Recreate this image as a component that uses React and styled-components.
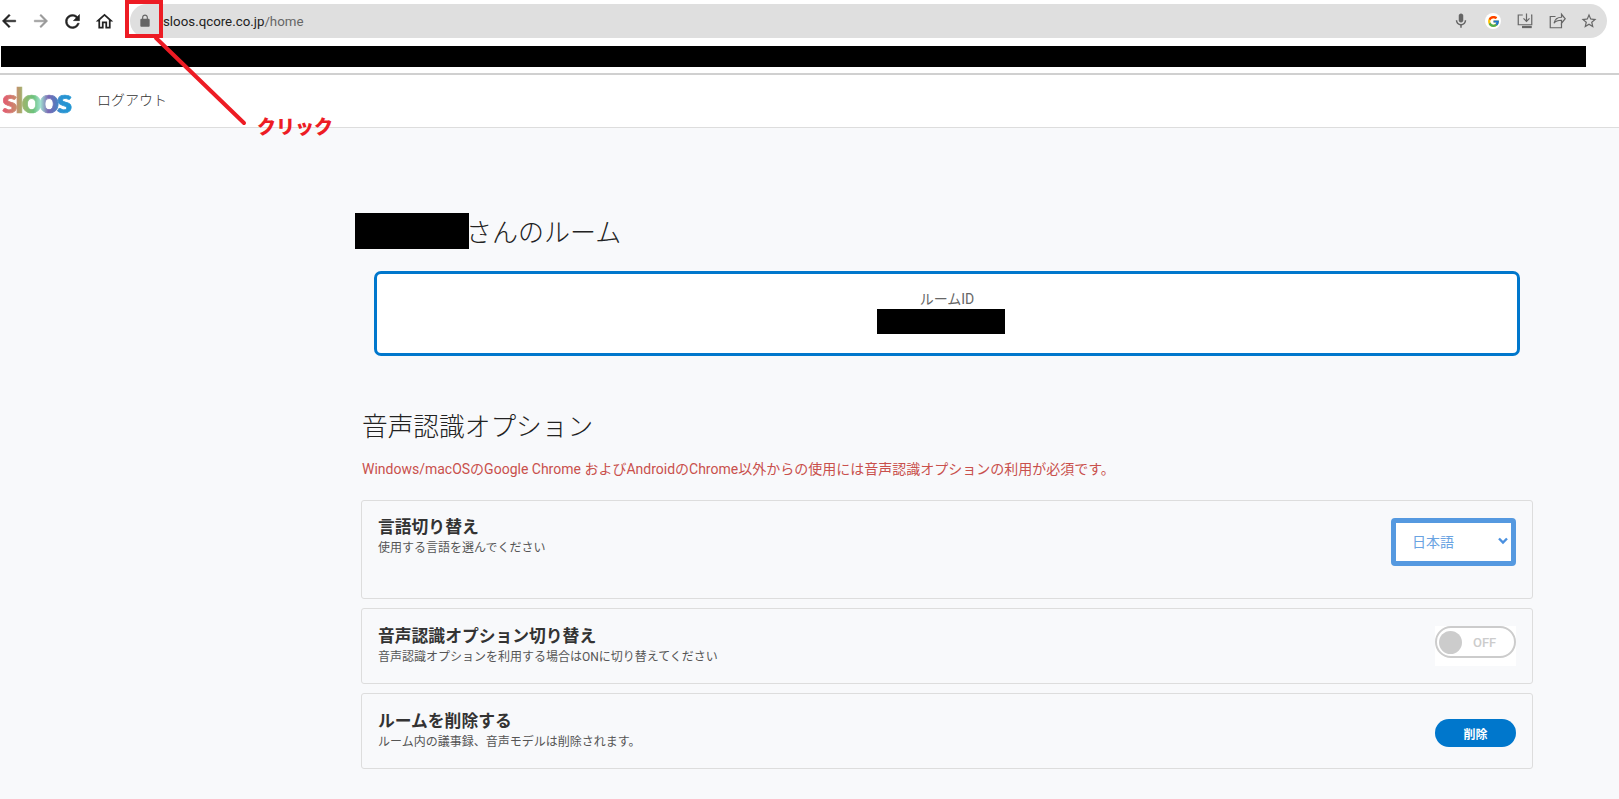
import React from 'react'
import styled, { createGlobalStyle } from 'styled-components'
import { FcGoogle } from 'react-icons/fc'

const GlobalStyle = createGlobalStyle`
  html, body {
    margin: 0;
    background: #f8f9fb;
  }

  body {
    font-family: Roboto, "Noto Sans CJK JP", sans-serif;
    color: #333;
  }
`

const Page = styled.div`
  position: relative;
  min-height: 799px;
  overflow: hidden;
`

const BrowserBar = styled.div`
  display: flex;
  align-items: center;
  height: 46px;
  padding-bottom: 4px;
  box-sizing: border-box;
  background: #fff;
`

const NavIcons = styled.div`
  display: flex;
  align-items: center;
  width: 130px;
  flex-shrink: 0;
`

const NavIcon = styled.svg`
  width: ${props => props.size || 20}px;
  height: ${props => props.size || 20}px;
  margin-left: ${props => props.left}px;
  fill: ${props => props.color || '#222'};
  stroke: ${props => props.color || '#222'};
  stroke-width: ${props => props.weight ?? 0.6};
  flex-shrink: 0;
`

const Omnibox = styled.div`
  display: flex;
  align-items: center;
  width: 1477px;
  height: 34px;
  background: #dfdfdf;
  border-radius: 17px;
  padding-left: 33px;
  box-sizing: border-box;
  font-size: 13.3px;
`

const Host = styled.span`
  color: #222;
`

const UrlPath = styled.span`
  color: #666;
`

const OmniActions = styled.div`
  display: flex;
  align-items: center;
  margin-left: auto;
  margin-right: 9px;
  gap: 14px;
`

const ActionIcon = styled.svg`
  width: 18px;
  height: 18px;
  fill: ${props => props.filled ? '#666' : 'none'};
  stroke: ${props => props.filled ? 'none' : '#666'};
  stroke-width: 1.6;
`

const GoogleBadge = styled.span`
  display: flex;
  align-items: center;
  justify-content: center;
  width: 16px;
  height: 16px;
  margin: 0 1px;
  border-radius: 50%;
  background: #fff;
  font-size: 13px;
`

const BookmarkStrip = styled.div`
  height: 29px;
  background: #fff;
  border-bottom: 2px solid #d0d0d0;
  box-sizing: border-box;
`

const Redacted = styled.div`
  background: #000;
  width: ${props => props.w}px;
  height: ${props => props.h}px;
  flex-shrink: 0;
`

const BookmarkRedaction = styled(Redacted)`
  margin-left: 1px;
`

const Header = styled.header`
  display: flex;
  align-items: center;
  height: 53px;
  padding-bottom: 5px;
  background: #fff;
  border-bottom: 1px solid #ddd;
  box-sizing: border-box;
`

const Logo = styled.div`
  width: 70px;
  margin: 0 25px 0 2px;
  font-family: Lato, sans-serif;
  font-weight: 900;
  font-size: 35px;
  letter-spacing: -2.5px;
  line-height: 40px;
  flex-shrink: 0;
  -webkit-text-stroke: 0.7px transparent;
  background: linear-gradient(90deg, #e05f70 4%, #c98a6c 20%, #9cb56c 30%, #6cc27c 45%, #a0e0d0 55%, #7a68b4 66%, #5a78bc 76%, #2b93d2 84%, #2196d3 100%);
  background-clip: text;
  -webkit-background-clip: text;
  color: transparent;
`

const LogoutLink = styled.a`
  font-size: 14px;
  color: #333;
  font-weight: 300;
`

const Main = styled.main`
  display: flex;
  flex-direction: column;
  width: 1178px;
  margin-left: 355px;
  padding-top: 85px;
`

const RoomTitle = styled.h1`
  display: flex;
  align-items: center;
  height: 36px;
  margin: 0;
  font-size: 26px;
  line-height: 36px;
  font-weight: 300;
  color: #222;
`

const TitleText = styled.span`
  margin: 4px 0 0 -3px;
`

const RoomCard = styled.div`
  display: flex;
  flex-direction: column;
  align-items: center;
  width: 1146px;
  height: 85px;
  margin: 22px 0 0 19px;
  padding-top: 16px;
  box-sizing: border-box;
  background: #fff;
  border: 3px solid #0077cc;
  border-radius: 7px;
`

const RoomLabel = styled.div`
  margin-bottom: 1px;
  font-size: 14px;
  line-height: 18px;
  color: #666;
`

const RoomIdRedaction = styled(Redacted)`
  margin-right: 12px;
`

const SectionTitle = styled.h2`
  margin: 53px 0 0 7px;
  font-size: 25.7px;
  line-height: 36px;
  font-weight: 300;
  color: #222;
`

const Notice = styled.p`
  margin: 14px 0 21px 7px;
  font-size: 14px;
  line-height: 20px;
  color: #c9504c;
`

const OptionList = styled.div`
  display: flex;
  flex-direction: column;
  gap: 9px;
  margin-left: 6px;
`

const OptionCard = styled.section`
  display: flex;
  justify-content: space-between;
  align-items: flex-start;
  height: ${props => props.h}px;
  padding: ${props => props.top}px 16px 0 16px;
  box-sizing: border-box;
  border: 1px solid #ddd;
  border-radius: 3px;
`

const OptionTitle = styled.div`
  font-size: 16.8px;
  line-height: 22px;
  font-weight: 700;
  color: #333;
`

const OptionText = styled.div`
  margin-top: 1px;
  font-size: 12px;
  line-height: 18px;
  color: #555;
`

const SelectBox = styled.div`
  display: flex;
  align-items: center;
  justify-content: space-between;
  width: 125px;
  height: 48px;
  margin-top: 2px;
  padding: 0 3px 2px 16px;
  box-sizing: border-box;
  background: #fff;
  border: 5px solid #5599e0;
  border-radius: 4px;
  font-size: 14px;
  color: #6aa3e2;
`

const Chevron = styled.svg`
  width: 10px;
  height: 8px;
  fill: none;
  stroke: #4a90e0;
  stroke-width: 2.4;
`

const ToggleWrap = styled.div`
  width: 81px;
  height: 40px;
  margin-top: 1px;
  background: #fff;
`

const Toggle = styled.div`
  display: flex;
  align-items: center;
  height: 32px;
  padding: 0 0 0 2px;
  box-sizing: border-box;
  border: 2px solid #ccc;
  border-radius: 16px;
`

const ToggleKnob = styled.span`
  width: 23px;
  height: 23px;
  border-radius: 50%;
  background: #ccc;
`

const ToggleText = styled.span`
  margin-left: 11px;
  font-size: 13px;
  font-weight: 500;
  color: #ccc;
`

const DeleteButton = styled.button`
  width: 81px;
  height: 28px;
  margin-top: 9px;
  border: none;
  border-radius: 14px;
  background: #0077cc;
  color: #fff;
  font-family: inherit;
  font-size: 12px;
  font-weight: 700;
`

const AnnotationLayer = styled.svg`
  position: absolute;
  top: 0;
  left: 0;
  width: 400px;
  height: 145px;
  pointer-events: none;
`

const ClickLabel = styled.div`
  position: absolute;
  top: 115px;
  left: 257px;
  font-size: 19px;
  line-height: 26px;
  font-weight: 900;
  color: #ed1c24;
`

const LockIcon = styled.svg`
  position: absolute;
  top: 14px;
  left: 138px;
  width: 14px;
  height: 14px;
  fill: #666;
`

const options = [
  { title: '言語切り替え', text: '使用する言語を選んでください', h: 99, top: 15 },
  { title: '音声認識オプション切り替え', text: '音声認識オプションを利用する場合はONに切り替えてください', h: 76, top: 16 },
  { title: 'ルームを削除する', text: 'ルーム内の議事録、音声モデルは削除されます。', h: 76, top: 16 },
]

const controls = [
  <SelectBox key="lang">
    日本語
    <Chevron viewBox="0 0 10 8"><path d="M1 1.5l4 4 4-4" /></Chevron>
  </SelectBox>,
  <ToggleWrap key="toggle">
    <Toggle>
      <ToggleKnob />
      <ToggleText>OFF</ToggleText>
    </Toggle>
  </ToggleWrap>,
  <DeleteButton key="delete" type="button">削除</DeleteButton>,
]

export default function App() {
  return (
    <Page>
      <GlobalStyle />
      <BrowserBar>
        <NavIcons>
          <NavIcon viewBox="0 0 24 24" left={-1}>
            <path d="M20 11H7.83l5.59-5.59L12 4l-8 8 8 8 1.41-1.41L7.83 13H20v-2z" />
          </NavIcon>
          <NavIcon viewBox="0 0 24 24" left={12} color="#999">
            <path d="M12 4l-1.41 1.41L16.17 11H4v2h12.17l-5.58 5.59L12 20l8-8z" />
          </NavIcon>
          <NavIcon viewBox="0 0 24 24" left={11} size={21}>
            <path d="M17.65 6.35C16.2 4.9 14.21 4 12 4c-4.42 0-7.99 3.58-7.99 8s3.57 8 7.99 8c3.73 0 6.84-2.55 7.73-6h-2.08c-.82 2.33-3.04 4-5.65 4-3.31 0-6-2.69-6-6s2.69-6 6-6c1.66 0 3.14.69 4.22 1.78L13 11h7V4l-2.35 2.35z" />
          </NavIcon>
          <NavIcon viewBox="0 0 24 24" left={11} size={21} weight={0}>
            <path d="M12 5.69l5 4.5V18h-2v-6H9v6H7v-7.81l5-4.5M12 3L2 12h3v8h6v-6h2v6h6v-8h3L12 3z" />
          </NavIcon>
        </NavIcons>
        <Omnibox>
          <Host>sloos.qcore.co.jp</Host>
          <UrlPath>/home</UrlPath>
          <OmniActions>
            <ActionIcon viewBox="0 0 24 24" filled>
              <path d="M12 14c1.66 0 3-1.34 3-3V5c0-1.66-1.34-3-3-3S9 3.34 9 5v6c0 1.66 1.34 3 3 3z" />
              <path d="M17 11c0 2.76-2.24 5-5 5s-5-2.24-5-5H5c0 3.53 2.61 6.43 6 6.92V21h2v-3.08c3.39-.49 6-3.39 6-6.92h-2z" />
            </ActionIcon>
            <GoogleBadge><FcGoogle /></GoogleBadge>
            <ActionIcon viewBox="0 0 24 24">
              <path d="M9 4H3v13h18V4h-1" />
              <path d="M14 2v10M10 8.5l4 4 4-4" />
              <path d="M8 20h13" strokeWidth="3" />
            </ActionIcon>
            <ActionIcon viewBox="0 0 24 24">
              <path d="M10 6H3v15h15v-6" />
              <path d="M8 15c1-5 5-8 10-8V3l5 6-5 6v-4c-4 0-8 1-10 4z" />
            </ActionIcon>
            <ActionIcon viewBox="0 0 24 24" filled>
              <path d="M22 9.24l-7.19-.62L12 2 9.19 8.63 2 9.24l5.46 4.73L5.82 21 12 17.27 18.18 21l-1.63-7.03L22 9.24zM12 15.4l-3.76 2.27 1-4.28-3.32-2.88 4.38-.38L12 6.1l1.71 4.04 4.38.38-3.32 2.88 1 4.28L12 15.4z" />
            </ActionIcon>
          </OmniActions>
        </Omnibox>
      </BrowserBar>
      <BookmarkStrip>
        <BookmarkRedaction w={1585} h={21} />
      </BookmarkStrip>
      <Header>
        <Logo>sloos</Logo>
        <LogoutLink>ログアウト</LogoutLink>
      </Header>
      <Main>
        <RoomTitle>
          <Redacted w={114} h={36} />
          <TitleText>さんのルーム</TitleText>
        </RoomTitle>
        <RoomCard>
          <RoomLabel>ルームID</RoomLabel>
          <RoomIdRedaction w={128} h={25} />
        </RoomCard>
        <SectionTitle>音声認識オプション</SectionTitle>
        <Notice>Windows/macOSのGoogle Chrome およびAndroidのChrome以外からの使用には音声認識オプションの利用が必須です。</Notice>
        <OptionList>
          {options.map((option, i) => (
            <OptionCard key={option.title} h={option.h} top={option.top}>
              <div>
                <OptionTitle>{option.title}</OptionTitle>
                <OptionText>{option.text}</OptionText>
              </div>
              {controls[i]}
            </OptionCard>
          ))}
        </OptionList>
      </Main>
      <LockIcon viewBox="0 0 24 24">
        <path d="M18 8h-1V6c0-2.76-2.24-5-5-5S7 3.24 7 6v2H6c-1.1 0-2 .9-2 2v10c0 1.1.9 2 2 2h12c1.1 0 2-.9 2-2V10c0-1.1-.9-2-2-2zM9 6c0-1.66 1.34-3 3-3s3 1.34 3 3v2H9V6z" />
      </LockIcon>
      <AnnotationLayer viewBox="0 0 400 145">
        <rect x="127" y="2" width="34" height="34" fill="none" stroke="#ed1c24" strokeWidth="4" />
        <path d="M156 38L244 123" stroke="#ed1c24" strokeWidth="4" strokeLinecap="round" />
      </AnnotationLayer>
      <ClickLabel>クリック</ClickLabel>
    </Page>
  )
}
